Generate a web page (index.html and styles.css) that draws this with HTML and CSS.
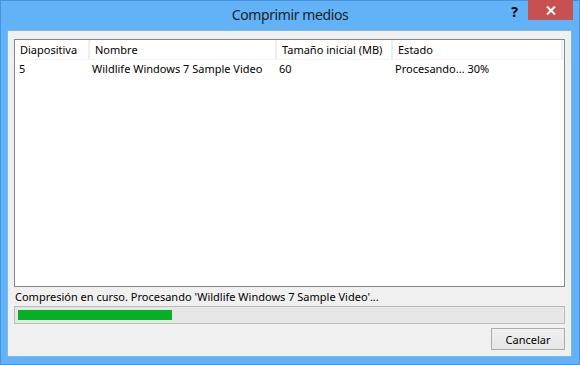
FILE: index.html
```html
<!DOCTYPE html>
<html lang="es">
<head>
    <meta charset="UTF-8">
    <title>Comprimir medios</title>
    <link rel="stylesheet" href="styles.css">
</head>
<body>
    <div class="window">
        <div class="titlebar">
            <span class="title">Comprimir medios</span>
            <span class="help">?</span>
            <span class="close">
                <svg width="10" height="9" viewBox="0 0 10 9">
                    <path d="M1 0.5 L9 8.5 M9 0.5 L1 8.5" stroke="#fff" stroke-width="2"/>
                </svg>
            </span>
        </div>

        <div class="client">
            <div class="listbox">
                <div class="row header">
                    <div class="cell">Diapositiva</div>
                    <div class="cell">Nombre</div>
                    <div class="cell">Tamaño inicial (MB)</div>
                    <div class="cell">Estado</div>
                </div>
                <div class="row item">
                    <div class="cell">5</div>
                    <div class="cell">Wildlife Windows 7 Sample Video</div>
                    <div class="cell">60</div>
                    <div class="cell">Procesando... 30%</div>
                </div>
            </div>

            <div class="status">Compresión en curso. Procesando 'Wildlife Windows 7 Sample Video'...</div>

            <div class="progress">
                <div class="progress-fill" style="width: 28.4%"></div>
            </div>

            <div class="actions">
                <button class="btn">Cancelar</button>
            </div>
        </div>
    </div>
</body>
</html>
```

FILE: styles.css
```css
body {
    margin: 0;
    font-family: 'Noto Sans', 'Open Sans', sans-serif;
    font-size: 11px;
    color: #000;
}

.window {
    width: 580px;
    height: 365px;
    box-sizing: border-box;
    border: 1px solid #4a93dc;
    background-color: #62b2f8;
    display: flex;
    flex-direction: column;
}

.titlebar {
    height: 29px;
    position: relative;
    display: flex;
    justify-content: center;
    align-items: center;
}

.title {
    font-size: 14px;
    letter-spacing: -0.4px;
    color: #1e1e1e;
    margin-top: -3px;
}

.help {
    position: absolute;
    right: 61px;
    top: 1px;
    font-size: 14px;
    font-weight: bold;
    color: #000;
}

.close {
    position: absolute;
    right: 6px;
    top: -1px;
    width: 45px;
    height: 20px;
    background-color: #c75050;
    display: flex;
    justify-content: center;
    align-items: center;
}

.client {
    flex: 1;
    margin: 0 7px 7px 6px;
    border: 1px solid #7fb6ea;
    background-color: #f0f0f0;
    padding: 8px 6px 0 6px;
    display: flex;
    flex-direction: column;
}

.listbox {
    height: 248px;
    box-sizing: border-box;
    border: 1px solid #828790;
    background-color: #fff;
}

.row {
    display: grid;
    grid-template-columns: 75px 187px 116px 1fr;
    margin-right: 1px;
}

.header {
    height: 19px;
    align-items: center;
    border-bottom: 1px solid #f0f3f7;
}

.header .cell {
    padding-left: 5px;
    border-right: 2px solid #eaeff5;
    height: 19px;
    line-height: 19px;
}

.item {
    height: 18px;
    line-height: 18px;
}

.item .cell {
    padding-left: 2px;
}

.item .cell:first-child {
    padding-left: 4px;
}

.cell {
    white-space: nowrap;
    overflow: hidden;
}

.status {
    height: 19px;
    line-height: 19px;
    padding-left: 1px;
    color: #000;
}

.progress {
    height: 18px;
    box-sizing: border-box;
    border: 1px solid #bcbcbc;
    background-color: #e6e6e6;
    padding: 3px;
}

.progress-fill {
    height: 10px;
    background-color: #06b025;
}

.actions {
    display: flex;
    justify-content: flex-end;
    padding-top: 4px;
}

.btn {
    width: 74px;
    height: 22px;
    border: 1px solid #acacac;
    background: linear-gradient(#f0f0f0, #e5e5e5);
    font-family: inherit;
    font-size: 11px;
    color: #000;
    padding: 0;
    margin: 0;
}
```
